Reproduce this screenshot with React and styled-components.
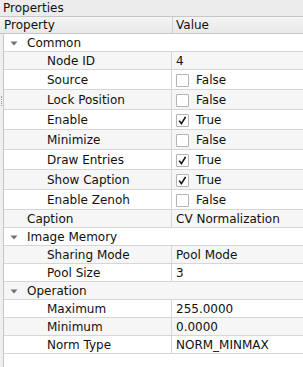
import React from "react";
import styled, { createGlobalStyle } from "styled-components";

const Global = createGlobalStyle`
  html, body { margin: 0; padding: 0; }
  body {
    background: #efefef;
    font-family: "DejaVu Sans", "Noto Sans", sans-serif;
    font-size: 12px;
    color: #101010;
  }
`;

const Panel = styled.div`
  position: relative;
  width: 303px;
  height: 367px;
  display: flex;
  flex-direction: column;
  overflow: hidden;
`;

const Title = styled.div`
  height: 16px;
  line-height: 16px;
  padding-left: 3px;
  background: #ececec;
`;

const Header = styled.div`
  display: grid;
  grid-template-columns: 172px 1fr;
  height: 18px;
  box-sizing: border-box;
  border-top: 1px solid #c6c6c6;
  border-bottom: 1px solid #c6c6c6;
  background: linear-gradient(#f4f4f4, #e9e9e9);
`;

const HeaderCell = styled.div`
  line-height: 17px;
  padding-left: ${(p) => (p.$value ? "3px" : "4px")};
  border-left: ${(p) => (p.$value ? "1px solid #cfcfcf" : "none")};
`;

const Body = styled.div`
  flex: 1;
  margin-left: 3px;
  border-left: 1px solid #c8c8c8;
  background: #ffffff;
  display: flex;
  flex-direction: column;
`;

const Row = styled.div`
  display: grid;
  grid-template-columns: ${(p) => (p.$group ? "1fr" : "168px 1fr")};
  height: ${(p) => (p.$tall ? 20 : 18)}px;
  box-sizing: border-box;
  border-bottom: 1px solid #d6d6d6;
  background: ${(p) => (p.$alt ? "#f6f6f6" : "#ffffff")};
`;

const NameCell = styled.div`
  display: flex;
  align-items: center;
  padding-top: 1px;
  padding-left: ${(p) => (p.$level === 1 ? 43 : 6)}px;
  border-right: ${(p) => (p.$group ? "none" : "1px solid #d6d6d6")};
  white-space: nowrap;
`;

const Arrow = styled.span`
  width: 17px;
  display: flex;
  align-items: center;
  justify-content: flex-start;
`;

const ValueCell = styled.div`
  display: flex;
  align-items: center;
  padding-top: 1px;
  padding-left: 4px;
  white-space: nowrap;
`;

const Box = styled.span`
  width: 13px;
  height: 13px;
  box-sizing: border-box;
  border: 1px solid #b4b4b4;
  border-radius: 1px;
  background: #fff;
  margin-right: 7px;
  display: flex;
  align-items: center;
  justify-content: center;
`;

const Grip = styled.div`
  position: absolute;
  left: 1px;
  top: 96px;
  width: 1px;
  height: 10px;
  border-left: 1px dotted #9a9a9a;
`;

const Check = () => (
  <svg width="11" height="11" viewBox="0 0 11 11">
    <path d="M2.2 5.6 L4.4 8.6 L8.6 1.8" fill="none" stroke="#111" strokeWidth="1.6" />
  </svg>
);

const Triangle = () => (
  <svg width="8" height="5" viewBox="0 0 8 5">
    <path d="M0.5 0.5 L7.5 0.5 L4 4.5 Z" fill="#707070" />
  </svg>
);

const rows = [
  { group: true, name: "Common" },
  { name: "Node ID", value: "4", level: 1 },
  { name: "Source", check: false, level: 1 },
  { name: "Lock Position", check: false, level: 1 },
  { name: "Enable", check: true, level: 1 },
  { name: "Minimize", check: false, level: 1 },
  { name: "Draw Entries", check: true, level: 1 },
  { name: "Show Caption", check: true, level: 1 },
  { name: "Enable Zenoh", check: false, level: 1 },
  { name: "Caption", value: "CV Normalization", level: 0 },
  { group: true, name: "Image Memory" },
  { name: "Sharing Mode", value: "Pool Mode", level: 1 },
  { name: "Pool Size", value: "3", level: 1 },
  { group: true, name: "Operation" },
  { name: "Maximum", value: "255.0000", level: 1 },
  { name: "Minimum", value: "0.0000", level: 1 },
  { name: "Norm Type", value: "NORM_MINMAX", level: 1 },
];

export default function App() {
  return (
    <>
      <Global />
      <Panel>
        <Title>Properties</Title>
        <Header>
          <HeaderCell>Property</HeaderCell>
          <HeaderCell $value>Value</HeaderCell>
        </Header>
        <Body>
          {rows.map((r, i) => {
            const alt = i % 2 === 1;
            if (r.group) {
              return (
                <Row key={i} $group $alt={alt}>
                  <NameCell $group $level={0}>
                    <Arrow>
                      <Triangle />
                    </Arrow>
                    {r.name}
                  </NameCell>
                </Row>
              );
            }
            const isCheck = typeof r.check === "boolean";
            return (
              <Row key={i} $alt={alt} $tall={isCheck}>
                <NameCell $level={r.level}>
                  {r.level === 0 && <Arrow />}
                  {r.name}
                </NameCell>
                <ValueCell>
                  {isCheck ? (
                    <>
                      <Box>{r.check && <Check />}</Box>
                      {r.check ? "True" : "False"}
                    </>
                  ) : (
                    r.value
                  )}
                </ValueCell>
              </Row>
            );
          })}
        </Body>
        <Grip />
      </Panel>
    </>
  );
}
